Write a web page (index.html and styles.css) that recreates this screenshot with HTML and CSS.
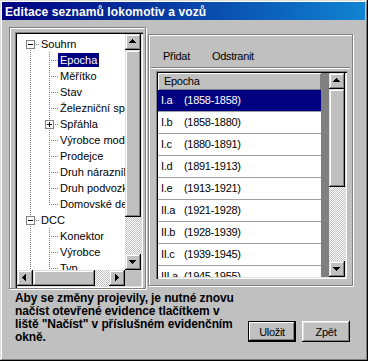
FILE: index.html
```html
<!DOCTYPE html>
<html lang="cs">
<head>
<meta charset="utf-8">
<title>Editace seznamů lokomotiv a vozů</title>
<link rel="stylesheet" href="styles.css">
</head>
<body>
<div class="window">
  <div class="titlebar"><span class="title">Editace seznamů lokomotiv a vozů</span></div>
  <div class="main">
    <div class="panel left">
      <div class="tree">
        <div class="tree-body">
          <div class="tree-items">
            <div class="tr"><span class="c c-rf"><svg class="exp" width="9" height="9" viewBox="0 0 9 9"><rect x="0.5" y="0.5" width="8" height="8" fill="#fff" stroke="#808080"/><path d="M2 4h5v1H2z" fill="#000"/></svg></span><span class="lbl">Souhrn</span></div>
            <div class="tr"><span class="c c-v"></span><span class="c c-t"></span><span class="lbl sel">Epocha</span></div>
            <div class="tr"><span class="c c-v"></span><span class="c c-t"></span><span class="lbl">Měřítko</span></div>
            <div class="tr"><span class="c c-v"></span><span class="c c-t"></span><span class="lbl">Stav</span></div>
            <div class="tr"><span class="c c-v"></span><span class="c c-t"></span><span class="lbl">Železniční společnost</span></div>
            <div class="tr"><span class="c c-v"></span><span class="c c-t"><svg class="exp" width="9" height="9" viewBox="0 0 9 9"><rect x="0.5" y="0.5" width="8" height="8" fill="#fff" stroke="#808080"/><path d="M2 4h5v1H2zM4 2h1v5H4z" fill="#000"/></svg></span><span class="lbl">Spřáhla</span></div>
            <div class="tr"><span class="c c-v"></span><span class="c c-t"></span><span class="lbl">Výrobce modelu</span></div>
            <div class="tr"><span class="c c-v"></span><span class="c c-t"></span><span class="lbl">Prodejce</span></div>
            <div class="tr"><span class="c c-v"></span><span class="c c-t"></span><span class="lbl">Druh nárazníku</span></div>
            <div class="tr"><span class="c c-v"></span><span class="c c-t"></span><span class="lbl">Druh podvozku</span></div>
            <div class="tr"><span class="c c-v"></span><span class="c c-l"></span><span class="lbl">Domovské depo</span></div>
            <div class="tr"><span class="c c-t"><svg class="exp" width="9" height="9" viewBox="0 0 9 9"><rect x="0.5" y="0.5" width="8" height="8" fill="#fff" stroke="#808080"/><path d="M2 4h5v1H2z" fill="#000"/></svg></span><span class="lbl">DCC</span></div>
            <div class="tr"><span class="c c-v"></span><span class="c c-t"></span><span class="lbl">Konektor</span></div>
            <div class="tr"><span class="c c-v"></span><span class="c c-t"></span><span class="lbl">Výrobce</span></div>
            <div class="tr"><span class="c c-v"></span><span class="c c-t"></span><span class="lbl">Typ</span></div>
            <div class="tr"><span class="c c-v"></span><span class="c c-t"></span><span class="lbl">Dekodér</span></div>
          </div>
          <div class="vscroll">
            <div class="sbtn"><svg width="16" height="16" viewBox="0 0 16 16"><path d="M7 5h1v1h1v1h1v1h1v1H4V8h1V7h1V6h1z" fill="#000"/></svg></div>
            <div class="sbtn thumb tree-vthumb"></div>
            <div class="track"></div>
            <div class="sbtn"><svg width="16" height="16" viewBox="0 0 16 16"><path d="M4 6h7v1h-1v1h-1v1h-1v1H7V9H6V8H5V7H4z" fill="#000"/></svg></div>
          </div>
        </div>
        <div class="hrow">
          <div class="hscroll">
            <div class="sbtn"><svg width="16" height="16" viewBox="0 0 16 16"><path d="M5 7h1V6h1V5h1V4h1v7H8v-1H7V9H6V8H5z" fill="#000"/></svg></div>
            <div class="sbtn thumb tree-hthumb"></div>
            <div class="track"></div>
            <div class="sbtn"><svg width="16" height="16" viewBox="0 0 16 16"><path d="M6 4h1v1h1v1h1v1h1v1H9v1H8v1H7v1H6z" fill="#000"/></svg></div>
          </div>
          <div class="corner"></div>
        </div>
      </div>
    </div>
    <div class="panel right">
      <div class="toolbar">
        <span class="tb-btn">Přidat</span>
        <span class="tb-btn">Odstranit</span>
      </div>
      <div class="grid">
        <div class="grid-col">
          <div class="gh">Epocha</div>
          <div class="gr sel"><span class="k">I.a</span><span>(1858-1858)</span></div>
          <div class="gr"><span class="k">I.b</span><span>(1858-1880)</span></div>
          <div class="gr"><span class="k">I.c</span><span>(1880-1891)</span></div>
          <div class="gr"><span class="k">I.d</span><span>(1891-1913)</span></div>
          <div class="gr"><span class="k">I.e</span><span>(1913-1921)</span></div>
          <div class="gr"><span class="k">II.a</span><span>(1921-1928)</span></div>
          <div class="gr"><span class="k">II.b</span><span>(1928-1939)</span></div>
          <div class="gr"><span class="k">II.c</span><span>(1939-1945)</span></div>
          <div class="gr"><span class="k">III.a</span><span>(1945-1955)</span></div>
        </div>
        <div class="grid-dark"></div>
        <div class="vscroll">
          <div class="sbtn"><svg width="16" height="16" viewBox="0 0 16 16"><path d="M7 5h1v1h1v1h1v1h1v1H4V8h1V7h1V6h1z" fill="#000"/></svg></div>
          <div class="sbtn thumb grid-vthumb"></div>
          <div class="track"></div>
          <div class="sbtn"><svg width="16" height="16" viewBox="0 0 16 16"><path d="M4 6h7v1h-1v1h-1v1h-1v1H7V9H6V8H5V7H4z" fill="#000"/></svg></div>
        </div>
      </div>
    </div>
  </div>
  <div class="bottom">
    <p class="note">Aby se změny projevily, je nutné znovu<br>načíst otevřené evidence tlačítkem v<br>liště "Načíst" v příslušném evidenčním<br>okně.</p>
    <div class="buttons">
      <button class="btn default" type="button">Uložit</button>
      <button class="btn" type="button">Zpět</button>
    </div>
  </div>
</div>
</body>
</html>
```
FILE: styles.css
```css
* { box-sizing: border-box; }

body {
  margin: 0;
  width: 368px;
  height: 361px;
  overflow: hidden;
  background: #c0c0c0;
  font-family: "Liberation Sans", Arial, sans-serif;
  font-size: 11px;
  letter-spacing: -0.3px;
  color: #000;
}

.window {
  width: 368px;
  height: 361px;
  background: #c0c0c0;
  box-shadow: inset -1px -1px #000, inset 1px 1px #dfdfdf, inset -2px -2px #808080, inset 2px 2px #fff;
  padding: 2px 3px 0 2px;
  display: flex;
  flex-direction: column;
}

.titlebar {
  flex: none;
  height: 18px;
  background: linear-gradient(to right, #000080, #1084d0);
  color: #fff;
  font-weight: bold;
  font-size: 12px;
  letter-spacing: 0.1px;
  padding: 1px 0 0 3px;
  display: flex;
  align-items: center;
}

.main {
  flex: none;
  height: 270px;
  display: flex;
  align-items: flex-start;
  padding-left: 7px;
}

.panel {
  border: 1px solid #808080;
  box-shadow: inset 1px 1px #fff, 1px 1px #fff;
}

.left {
  width: 137px;
  height: 262px;
  margin-top: 7px;
  padding: 4px 0 0 5px;
}

.tree {
  width: 128px;
  height: 256px;
  padding: 2px;
  background: #fff;
  box-shadow: inset 1px 1px #808080, inset 2px 2px #000, inset -1px -1px #fff, inset -2px -2px #dfdfdf;
  display: flex;
  flex-direction: column;
}

.tree-body {
  display: flex;
  height: 236px;
}

.tree-items {
  flex: 1;
  min-width: 0;
  overflow: hidden;
  padding: 2px 0 0 4px;
  white-space: nowrap;
  letter-spacing: 0;
  --dv: repeating-linear-gradient(to bottom, #808080 0 1px, transparent 1px 2px);
  --dh: repeating-linear-gradient(to right, #808080 0 1px, transparent 1px 2px);
}

.tr {
  display: flex;
  align-items: center;
  height: 16px;
}

.c {
  flex: none;
  width: 19px;
  height: 16px;
  display: flex;
  align-items: center;
}

.c-v { background: var(--dv) 9px 0 / 1px 16px no-repeat; }
.c-t { background: var(--dv) 9px 0 / 1px 16px no-repeat, var(--dh) 9px 8px / 10px 1px no-repeat; }
.c-l { background: var(--dv) 9px 0 / 1px 9px no-repeat, var(--dh) 9px 8px / 10px 1px no-repeat; }
.c-rf { background: var(--dv) 9px 8px / 1px 8px no-repeat, var(--dh) 9px 8px / 10px 1px no-repeat; }

.exp {
  display: block;
  margin-left: 5px;
}

.lbl {
  height: 14px;
  line-height: 14px;
  padding: 0 2px;
  margin-left: -1px;
}

.lbl.sel {
  background: #000080;
  color: #fff;
}

.vscroll {
  flex: none;
  width: 16px;
  display: flex;
  flex-direction: column;
}

.sbtn {
  flex: none;
  width: 16px;
  height: 16px;
  background: #c0c0c0;
  box-shadow: inset -1px -1px #000, inset 1px 1px #dfdfdf, inset -2px -2px #808080, inset 2px 2px #fff;
}

.sbtn svg { display: block; }

.track {
  flex: 1;
  background: repeating-conic-gradient(#c0c0c0 0 25%, #fff 0 50%) 0 0 / 2px 2px;
}

.tree-vthumb { height: 167px; }
.tree-hthumb { width: 62px; }
.grid-vthumb { height: 98px; }

.hrow {
  display: flex;
  height: 16px;
}

.hscroll {
  flex: 1;
  display: flex;
}

.corner {
  width: 16px;
  height: 16px;
  background: #c0c0c0;
}

.right {
  width: 205px;
  height: 252px;
  margin: 14px 0 0 2px;
}

.toolbar {
  height: 33px;
  margin: 0 2px;
  padding-left: 12px;
  border-bottom: 1px solid #808080;
  box-shadow: 0 1px #fff;
  display: flex;
  align-items: flex-end;
}

.tb-btn {
  height: 22px;
  line-height: 22px;
  margin-right: 22px;
}

.grid {
  width: 191px;
  height: 208px;
  margin: 3px 0 0 7px;
  padding: 2px;
  display: flex;
  background: #808080;
  box-shadow: inset 1px 1px #808080, inset 2px 2px #000, inset -1px -1px #fff, inset -2px -2px #dfdfdf;
}

.grid-col {
  width: 163px;
  overflow: hidden;
  background: #fff;
}

.grid-dark {
  width: 8px;
  background: #808080;
}

.gh {
  height: 17px;
  line-height: 17px;
  padding-left: 6px;
  background: #c0c0c0;
  box-shadow: inset 1px 1px #fff, inset -1px -1px #808080;
}

.gr {
  display: flex;
  height: 22px;
  line-height: 21px;
  padding-left: 3px;
  border-bottom: 1px solid #a0a0a0;
  white-space: nowrap;
}

.gr .k {
  width: 23px;
  flex: none;
}

.gr.sel {
  background: #000080;
  color: #fff;
}

.bottom {
  flex: none;
  display: flex;
  align-items: flex-start;
  padding-left: 13px;
}

.note {
  margin: 2px 0 0;
  font-weight: bold;
  font-size: 12px;
  line-height: 13px;
  letter-spacing: -0.1px;
  white-space: nowrap;
}

.buttons {
  margin: 31px 15px 0 auto;
  display: flex;
  gap: 6px;
}

.btn {
  width: 48px;
  height: 21px;
  padding: 0;
  border: none;
  background: #c0c0c0;
  font: inherit;
  letter-spacing: -0.3px;
  color: #000;
  box-shadow: inset -1px -1px #000, inset 1px 1px #fff, inset -2px -2px #808080, inset 2px 2px #dfdfdf;
}

.btn.default {
  box-shadow: inset 0 0 0 1px #000, inset -2px -2px #000, inset 2px 2px #fff, inset -3px -3px #808080;
}
```
